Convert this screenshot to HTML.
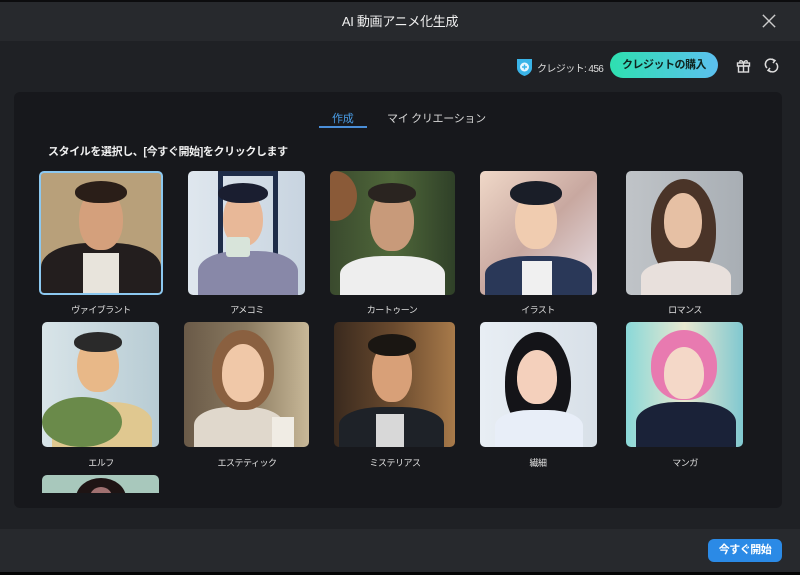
<!DOCTYPE html>
<html><head><meta charset="utf-8"><style>
*{margin:0;padding:0;box-sizing:border-box}
body{width:800px;height:575px;background:#1f2125;font-family:"Liberation Sans","Noto Sans CJK JP",sans-serif;position:relative;overflow:hidden;color:#e8e8e8}
.top{position:absolute;left:0;top:0;width:800px;height:2px;background:#0c0c0e}
.hdr{position:absolute;left:0;top:2px;width:800px;height:39px;background:#27292d;text-align:center;line-height:39px;font-size:13px;color:#f0f0f0;letter-spacing:-0.3px}
.x{position:absolute;right:24px;top:14px;width:14px;height:14px}
.panel{position:absolute;left:14px;top:92px;width:768px;height:416px;background:#17181c;border-radius:6px}
.bot{position:absolute;left:0;top:529px;width:800px;height:43px;background:#27292d}
.botline{position:absolute;left:0;top:572px;width:800px;height:3px;background:#050505}
.btn{position:absolute;left:708px;top:539px;width:74px;height:23px;background:#2b8ae6;border-radius:6px;color:#fff;font-size:11px;text-align:center;line-height:23px;font-weight:bold;letter-spacing:-0.5px}
.buy{position:absolute;left:610px;top:52px;width:108px;height:26px;border-radius:13px;background:linear-gradient(90deg,#2ee0b0,#5cc0f0);color:#10241f;font-size:11px;font-weight:bold;text-align:center;line-height:26px;letter-spacing:-0.5px}
.cred{position:absolute;left:537px;top:60px;font-size:10px;color:#ddd;letter-spacing:-0.6px}
.tab{position:absolute;top:110px;font-size:11px;letter-spacing:-0.3px}
.img{position:absolute;border-radius:5px;overflow:hidden}
.lbl{position:absolute;font-size:9px;color:#e0e0e0;text-align:center;width:130px;letter-spacing:-0.5px}
.head{position:absolute;border-radius:50% 50% 45% 45%}
.body{position:absolute;border-radius:40% 40% 0 0}
</style></head><body>
<div class="top"></div>
<div class="hdr">AI 動画アニメ化生成</div>
<svg class="x" viewBox="0 0 16 16"><path d="M1 1L15 15M15 1L1 15" stroke="#ccc" stroke-width="1.6"/></svg>

<svg style="position:absolute;left:516px;top:58px" width="17" height="19" viewBox="0 0 17 19"><path d="M1 1h15v9c0 4-4 7-7.5 8C5 17 1 14 1 10z" fill="#3ab4e8"/><circle cx="8.5" cy="9" r="4.5" fill="#e8f6ff"/><path d="M8.5 6.5v5M6 9h5" stroke="#3ab4e8" stroke-width="1.4"/></svg>
<div class="cred">クレジット: 456</div>
<div class="buy">クレジットの購入</div>
<svg style="position:absolute;left:736px;top:58px" width="15" height="15" viewBox="0 0 15 15" fill="none" stroke="#ddd" stroke-width="1.4"><rect x="1.5" y="5" width="12" height="3"/><rect x="2.5" y="8" width="10" height="6"/><path d="M7.5 5v9M7.5 5C6 2 3 2 4 4.5M7.5 5C9 2 12 2 11 4.5"/></svg>
<svg style="position:absolute;left:764px;top:57px" width="15" height="17" viewBox="0 0 15 17" fill="none" stroke="#ddd" stroke-width="1.5"><path d="M3 11A5 5 0 0 1 10 3.5M12 6A5 5 0 0 1 5 13.5"/><path d="M8 2l3 1.5-2 2.5M7 15l-3-1.5 2-2.5"/></svg>

<div class="panel"></div>
<div class="tab" style="left:332px;color:#4a9ee8">作成</div>
<div style="position:absolute;left:319px;top:126px;width:48px;height:2px;background:#4a8ed8"></div>
<div class="tab" style="left:387px;color:#d8d8d8">マイ クリエーション</div>
<div style="position:absolute;left:48px;top:143px;font-size:11px;font-weight:bold;color:#f0f0f0;letter-spacing:-0.4px">スタイルを選択し、[今すぐ開始]をクリックします</div>

<!-- row1 -->
<div class="img" style="left:39px;top:171px;width:124px;height:124px;border:2px solid #8cc8f0;background:#b8a07a">
 <div class="body" style="left:0;top:70px;width:120px;height:60px;background:#231e1e"></div>
 <div class="body" style="left:42px;top:80px;width:36px;height:50px;background:#e8e4dc;border-radius:0"></div>
 <div class="head" style="left:38px;top:15px;width:44px;height:62px;background:#d4a07c"></div>
 <div class="head" style="left:34px;top:8px;width:52px;height:22px;background:#2a1e18"></div>
</div>
<div class="img" style="left:188px;top:171px;width:117px;height:124px;background:linear-gradient(90deg,#dfe7ee,#c8d4e0)">
 <div style="position:absolute;left:30px;top:0;width:60px;height:90px;border:5px solid #1e2c48"></div>
 <div class="body" style="left:10px;top:80px;width:100px;height:50px;background:#8888a8"></div>
 <div class="head" style="left:35px;top:20px;width:40px;height:55px;background:#e8b898"></div>
 <div class="head" style="left:30px;top:12px;width:50px;height:20px;background:#1a1e30"></div>
 <div style="position:absolute;left:38px;top:66px;width:24px;height:20px;background:#d8e4da;border-radius:3px"></div>
</div>
<div class="img" style="left:330px;top:171px;width:125px;height:124px;background:linear-gradient(90deg,#3a4a2e,#50683a,#2f4028)">
 <div style="position:absolute;left:-18px;top:0;width:45px;height:50px;border-radius:50%;background:#8a5a38"></div>
 <div class="body" style="left:10px;top:85px;width:105px;height:45px;background:#eeeeee"></div>
 <div class="head" style="left:40px;top:18px;width:44px;height:62px;background:#c89a7a"></div>
 <div class="head" style="left:38px;top:12px;width:48px;height:20px;background:#2a2420"></div>
</div>
<div class="img" style="left:480px;top:171px;width:117px;height:124px;background:linear-gradient(135deg,#f0d8c8,#c8a8a0,#e8e0e8)">
 <div class="body" style="left:5px;top:85px;width:107px;height:45px;background:#2a3858"></div>
 <div class="body" style="left:42px;top:90px;width:30px;height:40px;background:#f0f0f0;border-radius:0"></div>
 <div class="head" style="left:35px;top:20px;width:42px;height:58px;background:#f0ccb0"></div>
 <div class="head" style="left:30px;top:10px;width:52px;height:24px;background:#1a1e28"></div>
</div>
<div class="img" style="left:626px;top:171px;width:117px;height:124px;background:linear-gradient(90deg,#c0c4c8,#a8aeb4)">
 <div class="head" style="left:25px;top:8px;width:65px;height:100px;background:#4a3428"></div>
 <div class="body" style="left:15px;top:90px;width:90px;height:40px;background:#e8e0dc"></div>
 <div class="head" style="left:38px;top:22px;width:38px;height:55px;background:#e6c0a4"></div>
</div>
<div class="lbl" style="left:36px;top:303px">ヴァイブラント</div>
<div class="lbl" style="left:182px;top:303px">アメコミ</div>
<div class="lbl" style="left:327px;top:303px">カートゥーン</div>
<div class="lbl" style="left:473px;top:303px">イラスト</div>
<div class="lbl" style="left:620px;top:303px">ロマンス</div>

<!-- row2 -->
<div class="img" style="left:42px;top:322px;width:117px;height:125px;background:linear-gradient(90deg,#d8e4e8,#b8ccd4)">
 <div class="body" style="left:10px;top:80px;width:100px;height:50px;background:#e0c890"></div>
 <div style="position:absolute;left:0;top:75px;width:80px;height:50px;background:#6a8a4a;border-radius:50%"></div>
 <div class="head" style="left:35px;top:15px;width:42px;height:55px;background:#e8b888"></div>
 <div class="head" style="left:32px;top:10px;width:48px;height:20px;background:#2a2a2a"></div>
</div>
<div class="img" style="left:184px;top:322px;width:125px;height:125px;background:linear-gradient(90deg,#6a5a48,#8a7a60,#c8b898)">
 <div class="body" style="left:10px;top:85px;width:90px;height:45px;background:#e0d8cc"></div>
 <div class="head" style="left:28px;top:8px;width:62px;height:80px;background:#8a6040"></div>
 <div class="head" style="left:38px;top:22px;width:42px;height:58px;background:#f0c8a8"></div>
 <div style="position:absolute;left:88px;top:95px;width:22px;height:30px;background:#f0ece4"></div>
</div>
<div class="img" style="left:334px;top:322px;width:121px;height:125px;background:linear-gradient(90deg,#3a2a1e,#6a4a2e,#a87a4a)">
 <div class="body" style="left:5px;top:85px;width:105px;height:45px;background:#1e2228"></div>
 <div class="body" style="left:42px;top:92px;width:28px;height:40px;background:#d8d8d8;border-radius:0"></div>
 <div class="head" style="left:38px;top:20px;width:40px;height:60px;background:#d8a078"></div>
 <div class="head" style="left:34px;top:12px;width:48px;height:22px;background:#1a1612"></div>
</div>
<div class="img" style="left:480px;top:322px;width:117px;height:125px;background:linear-gradient(90deg,#e8eef4,#d8e0e8)">
 <div class="head" style="left:25px;top:10px;width:66px;height:100px;background:#141418"></div>
 <div class="body" style="left:15px;top:88px;width:88px;height:40px;background:#e8eef8"></div>
 <div class="head" style="left:37px;top:28px;width:40px;height:54px;background:#f4d0bc"></div>
</div>
<div class="img" style="left:626px;top:322px;width:117px;height:125px;background:linear-gradient(90deg,#8ad8d8,#e8e8d0,#80c8d0)">
 <div class="body" style="left:10px;top:80px;width:100px;height:50px;background:#1a2238"></div>
 <div class="head" style="left:25px;top:8px;width:66px;height:70px;background:#e87ab0"></div>
 <div class="head" style="left:38px;top:25px;width:40px;height:52px;background:#f4d8c8"></div>
</div>
<div class="lbl" style="left:36px;top:456px">エルフ</div>
<div class="lbl" style="left:182px;top:456px">エステティック</div>
<div class="lbl" style="left:330px;top:456px">ミステリアス</div>
<div class="lbl" style="left:473px;top:456px">繊細</div>
<div class="lbl" style="left:620px;top:456px">マンガ</div>

<!-- row3 partial -->
<div class="img" style="left:42px;top:475px;width:117px;height:18px;border-radius:5px 5px 0 0;background:#a8c8bc">
 <div class="head" style="left:34px;top:3px;width:50px;height:40px;background:#1e1414"></div>
 <div class="head" style="left:48px;top:12px;width:22px;height:20px;background:#a07070"></div>
</div>

<div class="bot"></div>
<div class="btn">今すぐ開始</div>
<div class="botline"></div>
</body></html>
